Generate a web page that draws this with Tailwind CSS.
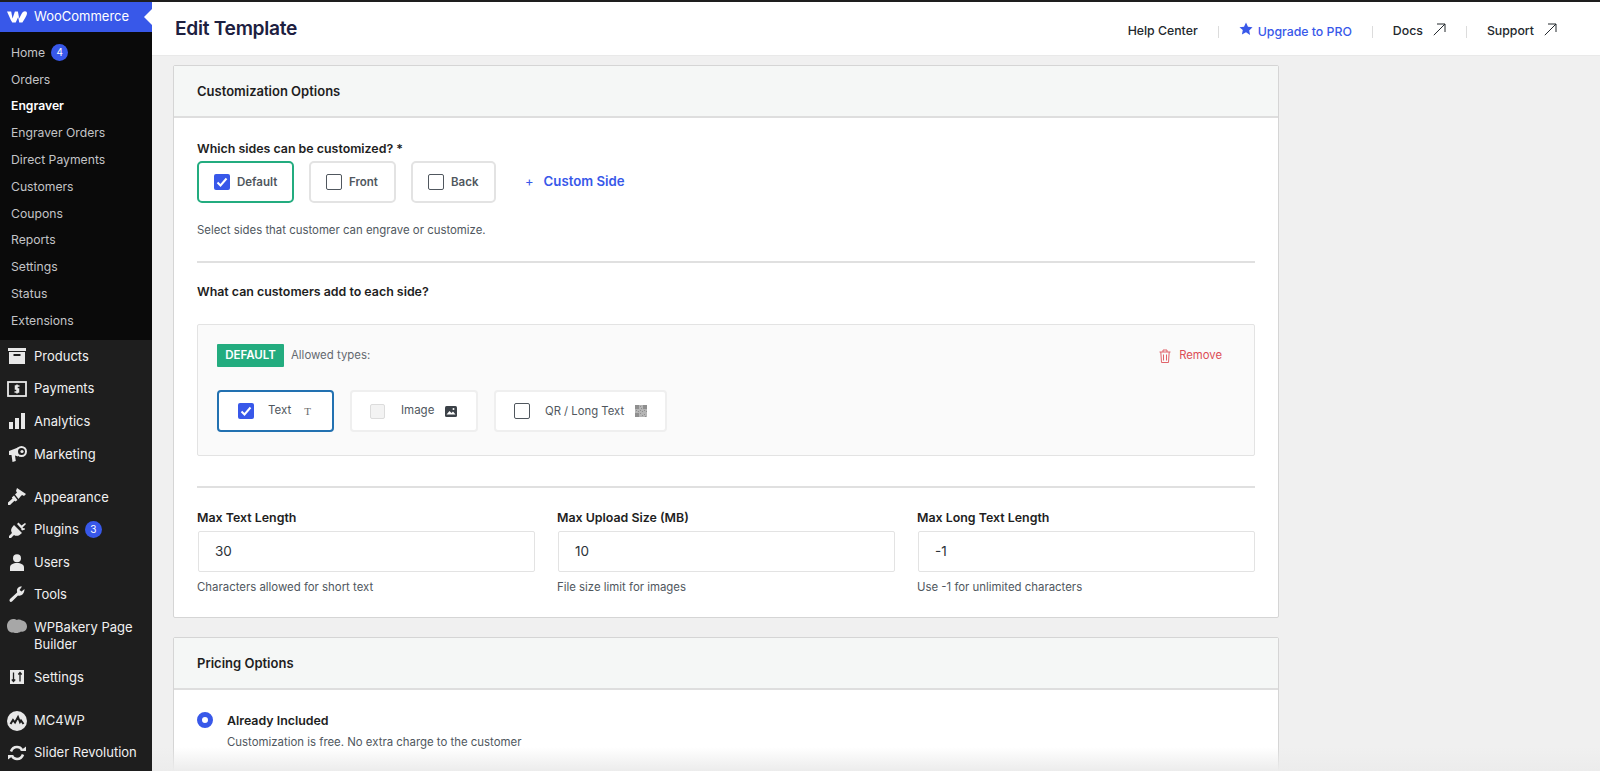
<!DOCTYPE html>
<html lang="en">
<head>
<meta charset="UTF-8" />
<title>Edit Template</title>
<script src="https://cdn.jsdelivr.net/npm/@tailwindcss/browser@4"></script>
</head>
<body class="bg-[#f0f0f0] font-['Inter','Liberation_Sans',sans-serif] text-[#1e1e1e]">
<div class="relative h-[771px] w-[1600px] overflow-hidden flex flex-col">
  <div class="h-[2px] bg-[#1e1e1e] shrink-0"></div>
  <div class="flex flex-1 min-h-0">

    <!-- admin sidebar -->
    <aside class="w-[152px] shrink-0 bg-[#1e1e1e] text-[13px] text-[#f0f0f1]">
      <div class="relative h-[30px] bg-[#3858e9] flex items-center text-white">
        <svg class="ml-[7px] w-[20px] h-[12px]" viewBox="0 0 20 12" fill="#fff"><path d="M0 .5h4.2l1.3 7 2.4-7h3l1.3 7L14.500 3c.7-1.700 2-2.800 3.500-2.800 1.300 0 2 .8 2 2 0 1.300-.8 3-2 5l-2.600 4.300h-3.200L11.200 6l-2.500 5.500H5.300L3.800 9z"/></svg>
        <span class="ml-[7px]">WooCommerce</span>
        <span class="absolute right-0 top-[7px] border-y-[8px] border-r-[8px] border-y-transparent border-r-[#fff]"></span>
      </div>
      <nav class="bg-[#0a0a0a] pt-[7.500px] h-[308px] text-[#c3c4c7] text-[12.200px]">
        <div class="h-[26.800px] pl-[11px] flex items-center gap-[6px]">Home <span class="w-[17px] h-[17px] rounded-full bg-[#3858e9] text-white text-[10px] flex items-center justify-center">4</span></div>
        <div class="h-[26.800px] pl-[11px] flex items-center">Orders</div>
        <div class="h-[26.800px] pl-[11px] flex items-center font-semibold text-white">Engraver</div>
        <div class="h-[26.800px] pl-[11px] flex items-center">Engraver Orders</div>
        <div class="h-[26.800px] pl-[11px] flex items-center">Direct Payments</div>
        <div class="h-[26.800px] pl-[11px] flex items-center">Customers</div>
        <div class="h-[26.800px] pl-[11px] flex items-center">Coupons</div>
        <div class="h-[26.800px] pl-[11px] flex items-center">Reports</div>
        <div class="h-[26.800px] pl-[11px] flex items-center">Settings</div>
        <div class="h-[26.800px] pl-[11px] flex items-center">Status</div>
        <div class="h-[26.800px] pl-[11px] flex items-center">Extensions</div>
      </nav>
      <div class="h-[32.500px] flex items-center">
        <svg class="mx-[7px] w-[20px] h-[16px] shrink-0" viewBox="0 0 20 16" fill="#e8e8e8"><path d="M1 0h18v3H1zM2 4h16v12H2zM6.500 6v2h7V6z" fill-rule="evenodd"/></svg>Products
      </div>
      <div class="h-[32.500px] flex items-center">
        <svg class="mx-[7px] w-[20px] h-[16px] shrink-0" viewBox="0 0 20 16" fill="none" stroke="#e8e8e8" stroke-width="1.800"><rect x="1" y="1" width="18" height="14"/><path d="M12.500 5H8.500v3h3v3h-4M10 3.500v9" stroke-width="1.500"/></svg>Payments
      </div>
      <div class="h-[32.500px] flex items-center">
        <svg class="mx-[7px] w-[20px] h-[16px] shrink-0" viewBox="0 0 20 16" fill="#e8e8e8"><path d="M2 9h4v7H2zM8 5h4v11H8zM14 0h4v16h-4z"/></svg>Analytics
      </div>
      <div class="h-[32.500px] flex items-center pt-[1px]">
        <svg class="mx-[7px] w-[20px] h-[18px] shrink-0" viewBox="0 0 20 18" fill="#e8e8e8"><path d="M2 6l9-3.500v9L8 10.500 8.800 16 5.500 17 4.500 10 2 10z"/><circle cx="14.500" cy="6.500" r="4.500" fill="none" stroke="#e8e8e8" stroke-width="2"/><circle cx="15" cy="6.500" r="1.600"/></svg>Marketing
      </div>
      <div class="h-[11px]"></div>
      <div class="h-[32.500px] flex items-center">
        <svg class="mx-[7px] w-[20px] h-[18px] shrink-0" viewBox="0 0 20 18" fill="#e8e8e8"><path d="M10 0l9 6-2 2-2-1-1.500 1.500L11.500 11 8 6.500l2-2L9 3zM7 7.500l3.500 4.500-2 1.500-1-.7L3 17H1v-2.500L5.500 10.500 4.800 9.500z"/></svg>Appearance
      </div>
      <div class="h-[32.500px] flex items-center">
        <svg class="mx-[7px] w-[20px] h-[18px] shrink-0" viewBox="0 0 20 18" fill="#e8e8e8"><path d="M7 4l8 8-2.500 2c-2 1.300-4 1-5.500 0L4 17H2v-2l3-3c-1-1.500-1.300-3.500 0-5.500zM10 3l1.500-1.500 3 3L18 2l1 1-3.500 3.500 1.500 1.500L16 9.500zM14 8l3.500-1 .5 1.500-3 1z"/></svg><span>Plugins</span>
        <span class="ml-[6px] w-[17px] h-[17px] rounded-full bg-[#3858e9] text-white text-[10px] flex items-center justify-center">3</span>
      </div>
      <div class="h-[32.500px] flex items-center">
        <svg class="mx-[7px] w-[20px] h-[17px] shrink-0" viewBox="0 0 20 17" fill="#e8e8e8"><circle cx="10" cy="4.200" r="4"/><path d="M3 17v-3.500C3 10.500 6 9 10 9s7 1.500 7 4.500V17z"/></svg>Users
      </div>
      <div class="h-[32.500px] flex items-center">
        <svg class="mx-[7px] w-[20px] h-[17px] shrink-0" viewBox="0 0 20 17" fill="#e8e8e8"><path d="M17.500 3l-3 2.500-2-1.500 2.500-3.500c-2.500-.5-5.500 1.500-5 4.500.1.700.2 1.200.1 1.500L3 13c-1.500 1.500.5 4 2 2.500l6-6c3 1 6.500-1.500 6.500-6.500z"/></svg>Tools
      </div>
      <div class="h-[50px] flex items-start pt-[8px] leading-[17px]">
        <svg class="mx-[7px] mt-[-1px] w-[20px] h-[16px] shrink-0" viewBox="0 0 20 16" fill="#a7a7a7"><path d="M0 8c0-4 3-7 6-7 2 0 3 .5 4 1 1.500-.7 3.500-.5 5 .5 3 .5 5 3 5 6 0 3.500-3 6-6 5-2 1.500-5 2-7.500 1C2.500 15 0 12 0 8z"/></svg>
        <span>WPBakery Page<br />Builder</span>
      </div>
      <div class="h-[32.500px] flex items-center">
        <svg class="mx-[7px] w-[20px] h-[16px] shrink-0" viewBox="0 0 20 16"><rect x="3" y="1" width="14" height="14" fill="#e8e8e8"/><path d="M6.500 3.500v9M4.800 10.500l1.700 2 1.700-2M13 12.500v-9M11.300 5.500l1.700-2 1.700 2" stroke="#1e1e1e" stroke-width="1.300" fill="none"/></svg>Settings
      </div>
      <div class="h-[11px]"></div>
      <div class="h-[32px] flex items-center">
        <svg class="mx-[7px] w-[20px] h-[20px] shrink-0" viewBox="0 0 20 20"><circle cx="10" cy="10" r="10" fill="#e8e8e8"/><path d="M3.500 13l2.500-4 2 2.500L11 6l2 5 1-1.500 2.500 3.500" fill="none" stroke="#1e1e1e" stroke-width="2"/></svg>MC4WP
      </div>
      <div class="h-[32.500px] flex items-center">
        <svg class="mx-[7px] w-[20px] h-[18px] shrink-0" viewBox="0 0 20 18" fill="none" stroke="#e8e8e8" stroke-width="2.500"><path d="M4 7.500C5 4.500 7.500 3 10 3c2.200 0 4 1 5 2.800M16 10.500C15 13.500 12.500 15 10 15c-2.200 0-4-1-5-2.800"/><path d="M13 7h6V2.500zM7 11H1v4.500z" fill="#e8e8e8" stroke="none"/></svg>Slider Revolution
      </div>
    </aside>

    <!-- page -->
    <main class="flex-1 min-w-0">
      <header class="h-[54px] bg-white flex items-center border-b border-[#e9e9e9] pl-[23px]">
        <h1 class="text-[19.200px] font-semibold tracking-[-0.3px] text-[#1d2040]">Edit Template</h1>
        <div class="ml-auto mt-[6px] flex items-center text-[12.300px] font-medium text-[#23282d] pr-[43px]">
          <span>Help Center</span>
          <span class="mx-[20px] w-px h-[12px] bg-[#dcdcdc]"></span>
          <svg class="w-[14px] h-[14px] mb-[5px]" viewBox="0 0 24 24" fill="#3858e9"><path d="M12 1l3.400 7.200 7.800 1-5.700 5.400 1.500 7.800L12 17.600l-7 3.800 1.500-7.800L.8 9.200l7.800-1z"/></svg>
          <span class="ml-[5px] text-[#3858e9] mt-[1px]">Upgrade to PRO</span>
          <span class="mx-[20px] w-px h-[12px] bg-[#dcdcdc]"></span>
          <span>Docs</span>
          <svg class="ml-[10px] w-[13px] h-[13px] mb-[4px]" viewBox="0 0 13 13" fill="none" stroke="#23282d"><path d="M.8 12.200L12 1M4 1h8v8"/></svg>
          <span class="mx-[20px] w-px h-[12px] bg-[#dcdcdc]"></span>
          <span>Support</span>
          <svg class="ml-[10px] w-[13px] h-[13px] mb-[4px]" viewBox="0 0 13 13" fill="none" stroke="#23282d"><path d="M.8 12.200L12 1M4 1h8v8"/></svg>
        </div>
      </header>

      <div class="w-[1106px] ml-[21px] mt-[9px]">
        <section class="bg-white border border-[#d5d5d5] rounded-[2px]">
          <div class="h-[52px] bg-[#f5f7f6] border-b-2 border-[#dedede] pl-[23px] pt-[2px] flex items-center text-[13px] font-semibold">Customization Options</div>
          <div class="px-[23px]">
            <p class="mt-[23px] text-[12.400px] font-semibold leading-[16px]">Which sides can be customized? *</p>
            <div class="mt-[4px] flex items-center h-[42px] text-[11.500px] font-semibold text-[#50575e]">
              <label class="w-[97px] h-[42px] border-2 border-[#23ac7f] rounded-[5px] flex items-center pl-[15px] gap-[7px]">
                <svg class="w-[16px] h-[16px]" viewBox="0 0 16 16"><rect width="16" height="16" rx="2" fill="#3858e9"/><path d="M3.500 8.500l3 3 6-7" fill="none" stroke="#fff" stroke-width="2"/></svg><span class="mt-[1px]">Default</span>
              </label>
              <label class="ml-[15px] w-[87px] h-[42px] border-2 border-[#e3e3e3] rounded-[5px] flex items-center pl-[15px] gap-[7px]">
                <span class="w-[16px] h-[16px] border border-[#50575e] rounded-[2px]"></span><span class="mt-[1px]">Front</span>
              </label>
              <label class="ml-[15px] w-[85px] h-[42px] border-2 border-[#e3e3e3] rounded-[5px] flex items-center pl-[15px] gap-[7px]">
                <span class="w-[16px] h-[16px] border border-[#50575e] rounded-[2px]"></span><span class="mt-[1px]">Back</span>
              </label>
              <span class="ml-[29px] text-[13px] font-normal text-[#3858e9]">+</span>
              <span class="ml-[10px] text-[13.200px] font-semibold text-[#3858e9]">Custom Side</span>
            </div>
            <p class="mt-[19px] text-[11.400px] leading-[16px] text-[#50575e]">Select sides that customer can engrave or customize.</p>
            <div class="mt-[23px] h-[2px] bg-[#e0e0e0]"></div>
            <p class="mt-[21px] text-[12.400px] font-semibold leading-[16px]">What can customers add to each side?</p>

            <div class="mt-[24px] h-[132px] bg-[#fafafa] border border-[#e3e3e3] rounded-[2px] px-[19px] pt-[19px]">
              <div class="flex items-center h-[23px]">
                <span class="w-[67px] h-[23px] bg-[#23ac7f] text-white text-[11.500px] font-semibold rounded-[1px] flex items-center justify-center">DEFAULT</span>
                <span class="ml-[7px] text-[11.400px] text-[#646970]">Allowed types:</span>
                <svg class="ml-auto w-[12px] h-[14px]" viewBox="0 0 12 14" fill="none" stroke="#e0636a"><path d="M.5 3h11M4 3V1h4v2M1.800 3l.7 10.500h7L10.200 3M4.500 5.500v6M7.500 5.500v6"/></svg>
                <span class="ml-[8px] mr-[13px] text-[11.300px] text-[#dc4c55]">Remove</span>
              </div>
              <div class="mt-[23px] flex h-[42px] gap-[16px] text-[11.500px] text-[#50575e]">
                <label class="w-[117px] border-2 border-[#2271b1] rounded-[4px] bg-white flex items-center pl-[19px]">
                  <svg class="w-[16px] h-[16px]" viewBox="0 0 16 16"><rect width="16" height="16" rx="2" fill="#3858e9"/><path d="M3.500 8.500l3 3 6-7" fill="none" stroke="#fff" stroke-width="2"/></svg>
                  <span class="ml-[14px]">Text</span>
                  <span class="ml-[13px] font-['Liberation_Serif',serif] text-[11px] text-[#6b6b6b]">T</span>
                </label>
                <label class="w-[128px] border-2 border-[#efefef] rounded-[4px] bg-white flex items-center pl-[18px]">
                  <span class="w-[15px] h-[15px] border border-[#dcdcdc] bg-[#f3f3f3] rounded-[2px]"></span>
                  <span class="ml-[16px]">Image</span>
                  <svg class="ml-[11px] w-[12px] h-[11px]" viewBox="0 0 12 11"><rect width="12" height="11" rx="1.500" fill="#3c4248"/><path d="M1.500 8.500l3-3.500 2 2 1.500-1.500 2.500 3z" fill="#fff"/><circle cx="8.500" cy="3" r="1" fill="#fff"/></svg>
                </label>
                <label class="w-[173px] border-2 border-[#efefef] rounded-[4px] bg-white flex items-center pl-[18px]">
                  <span class="w-[16px] h-[16px] border border-[#50575e] rounded-[2px]"></span>
                  <span class="ml-[15px] text-[11.300px]">QR / Long Text</span>
                  <svg class="ml-[11px] w-[12px] h-[12px]" viewBox="0 0 12 12" fill="#8f8f8f"><path d="M0 0h12v12H0z" fill="#b5b5b5"/><path d="M0 0h4v4H0zM8 0h4v4H8zM0 8h4v4H0zM5 1h1v1H5zM6 3h1v1H6zM5 5h1v1H5zM7 6h1v1H7zM1 5h1v1H1zM3 6h1v1H3zM9 5h1v1H9zM11 6h1v1h-1zM5 8h1v1H5zM7 10h1v1H7zM9 9h1v1H9zM10 11h1v1h-1z"/></svg>
                </label>
              </div>
            </div>

            <div class="mt-[30px] h-[2px] bg-[#e0e0e0]"></div>
            <div class="mt-[22px] grid grid-cols-[338px_338px_338px] gap-x-[22px]">
              <div>
                <p class="text-[12.400px] font-semibold leading-[16px]">Max Text Length</p>
                <div class="mt-[5px] ml-[1px] h-[41px] border border-[#e3e3e3] rounded-[2px] pl-[16px] flex items-center text-[13.500px] text-[#2c3338]">30</div>
                <p class="mt-[7px] text-[11.400px] leading-[16px] text-[#50575e]">Characters allowed for short text</p>
              </div>
              <div>
                <p class="text-[12.400px] font-semibold leading-[16px]">Max Upload Size (MB)</p>
                <div class="mt-[5px] ml-[1px] h-[41px] border border-[#e3e3e3] rounded-[2px] pl-[16px] flex items-center text-[13.500px] text-[#2c3338]">10</div>
                <p class="mt-[7px] text-[11.400px] leading-[16px] text-[#50575e]">File size limit for images</p>
              </div>
              <div>
                <p class="text-[12.400px] font-semibold leading-[16px]">Max Long Text Length</p>
                <div class="mt-[5px] ml-[1px] h-[41px] border border-[#e3e3e3] rounded-[2px] pl-[16px] flex items-center text-[13.500px] text-[#2c3338]">-1</div>
                <p class="mt-[7px] text-[11.400px] leading-[16px] text-[#50575e]">Use -1 for unlimited characters</p>
              </div>
            </div>
            <div class="h-[22px]"></div>
          </div>
        </section>

        <section class="mt-[19px] bg-white border border-[#d5d5d5] rounded-[2px] h-[200px]">
          <div class="h-[52px] bg-[#f5f7f6] border-b-2 border-[#dedede] pl-[23px] pt-[2px] flex items-center text-[13px] font-semibold">Pricing Options</div>
          <div class="pl-[23px] pt-[22px] flex">
            <span class="w-[16px] h-[16px] rounded-full border-[5px] border-[#3858e9]"></span>
            <div class="ml-[14px]">
              <p class="text-[12.400px] font-semibold leading-[18px]">Already Included</p>
              <p class="mt-[4px] text-[11.400px] leading-[16px] text-[#50575e]">Customization is free. No extra charge to the customer</p>
            </div>
          </div>
        </section>
      </div>
    </main>
  </div>
  <!-- fade at the bottom of the capture -->
  <div class="absolute left-[152px] right-0 bottom-0 h-[24px] bg-gradient-to-b from-white/0 to-[#ececec]"></div>
</div>
</body>
</html>
